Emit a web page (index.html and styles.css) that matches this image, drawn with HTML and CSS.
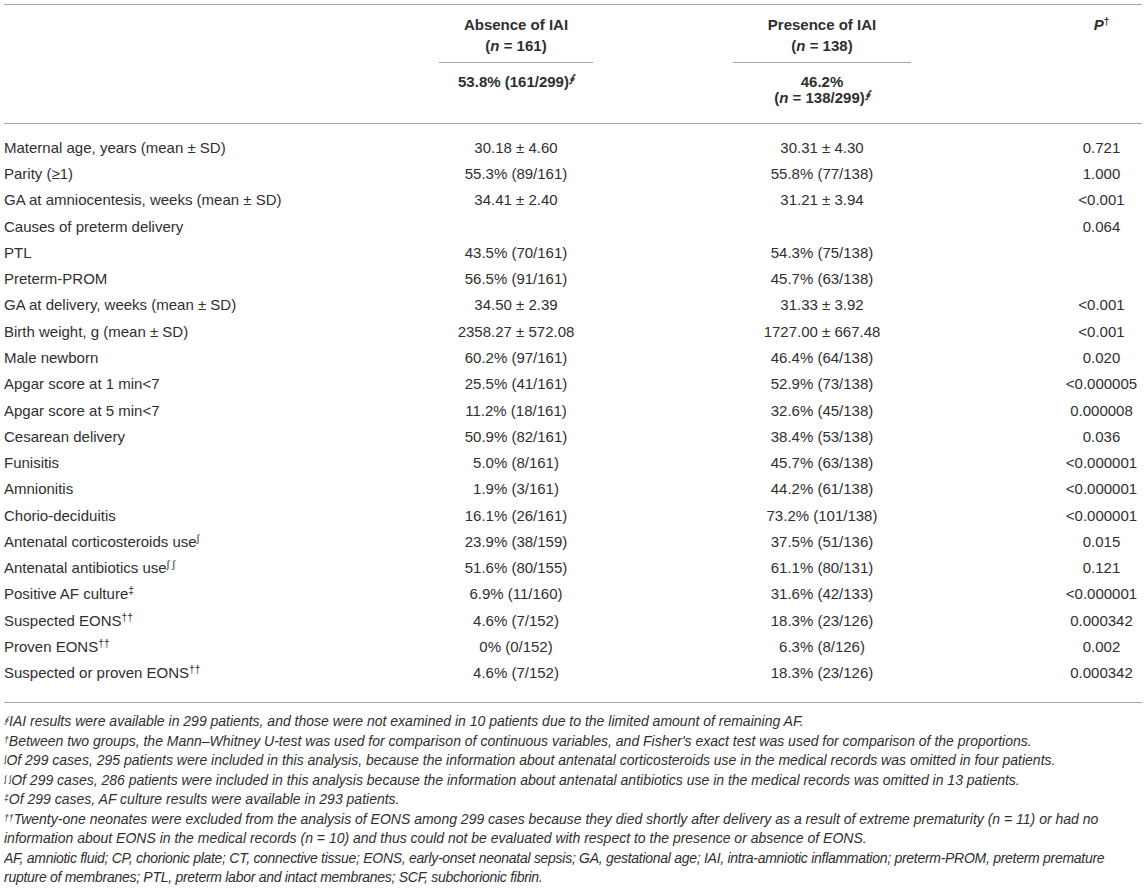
FILE: index.html
```html
<!DOCTYPE html>
<html lang="en">
<head>
<meta charset="utf-8">
<title>Table</title>
<link rel="stylesheet" href="styles.css">
</head>
<body>
<table class="tbl">
  <colgroup>
    <col class="c-lab">
    <col class="c-abs">
    <col class="c-pre">
    <col class="c-p">
  </colgroup>
  <thead>
    <tr>
      <th class="lab"></th>
      <th class="abs">
        <div class="grp-top">Absence of IAI<br>(<i>n</i> = 161)</div>
        <div class="grp-sub">53.8% (161/299)<sup class="sym">∮</sup></div>
      </th>
      <th class="pre">
        <div class="grp-top">Presence of IAI<br>(<i>n</i> = 138)</div>
        <div class="grp-sub">46.2%<br>(<i>n</i> = 138/299)<sup class="sym">∮</sup></div>
      </th>
      <th class="pv"><i>P</i><sup>†</sup></th>
    </tr>
  </thead>
  <tbody>
    <tr class="first"><td class="lab">Maternal age, years (mean ± SD)</td><td class="abs">30.18 ± 4.60</td><td class="pre">30.31 ± 4.30</td><td class="pv">0.721</td></tr>
    <tr><td class="lab">Parity (≥1)</td><td class="abs">55.3% (89/161)</td><td class="pre">55.8% (77/138)</td><td class="pv">1.000</td></tr>
    <tr><td class="lab">GA at amniocentesis, weeks (mean ± SD)</td><td class="abs">34.41 ± 2.40</td><td class="pre">31.21 ± 3.94</td><td class="pv">&lt;0.001</td></tr>
    <tr><td class="lab">Causes of preterm delivery</td><td class="abs"></td><td class="pre"></td><td class="pv">0.064</td></tr>
    <tr><td class="lab">PTL</td><td class="abs">43.5% (70/161)</td><td class="pre">54.3% (75/138)</td><td class="pv"></td></tr>
    <tr><td class="lab">Preterm-PROM</td><td class="abs">56.5% (91/161)</td><td class="pre">45.7% (63/138)</td><td class="pv"></td></tr>
    <tr><td class="lab">GA at delivery, weeks (mean ± SD)</td><td class="abs">34.50 ± 2.39</td><td class="pre">31.33 ± 3.92</td><td class="pv">&lt;0.001</td></tr>
    <tr><td class="lab">Birth weight, g (mean ± SD)</td><td class="abs">2358.27 ± 572.08</td><td class="pre">1727.00 ± 667.48</td><td class="pv">&lt;0.001</td></tr>
    <tr><td class="lab">Male newborn</td><td class="abs">60.2% (97/161)</td><td class="pre">46.4% (64/138)</td><td class="pv">0.020</td></tr>
    <tr><td class="lab">Apgar score at 1 min&lt;7</td><td class="abs">25.5% (41/161)</td><td class="pre">52.9% (73/138)</td><td class="pv">&lt;0.000005</td></tr>
    <tr><td class="lab">Apgar score at 5 min&lt;7</td><td class="abs">11.2% (18/161)</td><td class="pre">32.6% (45/138)</td><td class="pv">0.000008</td></tr>
    <tr><td class="lab">Cesarean delivery</td><td class="abs">50.9% (82/161)</td><td class="pre">38.4% (53/138)</td><td class="pv">0.036</td></tr>
    <tr><td class="lab">Funisitis</td><td class="abs">5.0% (8/161)</td><td class="pre">45.7% (63/138)</td><td class="pv">&lt;0.000001</td></tr>
    <tr><td class="lab">Amnionitis</td><td class="abs">1.9% (3/161)</td><td class="pre">44.2% (61/138)</td><td class="pv">&lt;0.000001</td></tr>
    <tr><td class="lab">Chorio-deciduitis</td><td class="abs">16.1% (26/161)</td><td class="pre">73.2% (101/138)</td><td class="pv">&lt;0.000001</td></tr>
    <tr><td class="lab">Antenatal corticosteroids use<sup class="sym">∫</sup></td><td class="abs">23.9% (38/159)</td><td class="pre">37.5% (51/136)</td><td class="pv">0.015</td></tr>
    <tr><td class="lab">Antenatal antibiotics use<sup class="sym">∫ ∫</sup></td><td class="abs">51.6% (80/155)</td><td class="pre">61.1% (80/131)</td><td class="pv">0.121</td></tr>
    <tr><td class="lab">Positive AF culture<sup>‡</sup></td><td class="abs">6.9% (11/160)</td><td class="pre">31.6% (42/133)</td><td class="pv">&lt;0.000001</td></tr>
    <tr><td class="lab">Suspected EONS<sup>††</sup></td><td class="abs">4.6% (7/152)</td><td class="pre">18.3% (23/126)</td><td class="pv">0.000342</td></tr>
    <tr><td class="lab">Proven EONS<sup>††</sup></td><td class="abs">0% (0/152)</td><td class="pre">6.3% (8/126)</td><td class="pv">0.002</td></tr>
    <tr class="last"><td class="lab">Suspected or proven EONS<sup>††</sup></td><td class="abs">4.6% (7/152)</td><td class="pre">18.3% (23/126)</td><td class="pv">0.000342</td></tr>
  </tbody>
</table>
<div class="notes">
  <p class="note"><sup class="sym">∮</sup>IAI results were available in 299 patients, and those were not examined in 10 patients due to the limited amount of remaining AF.</p>
  <p class="note"><sup>†</sup>Between two groups, the Mann–Whitney U-test was used for comparison of continuous variables, and Fisher's exact test was used for comparison of the proportions.</p>
  <p class="note"><sup class="sym">∫</sup>Of 299 cases, 295 patients were included in this analysis, because the information about antenatal corticosteroids use in the medical records was omitted in four patients.</p>
  <p class="note"><sup class="sym">∫ ∫</sup>Of 299 cases, 286 patients were included in this analysis because the information about antenatal antibiotics use in the medical records was omitted in 13 patients.</p>
  <p class="note"><sup>‡</sup>Of 299 cases, AF culture results were available in 293 patients.</p>
  <p class="note"><sup>††</sup>Twenty-one neonates were excluded from the analysis of EONS among 299 cases because they died shortly after delivery as a result of extreme prematurity (n = 11) or had no information about EONS in the medical records (n = 10) and thus could not be evaluated with respect to the presence or absence of EONS.</p>
  <p class="note abbr">AF, amniotic fluid; CP, chorionic plate; CT, connective tissue; EONS, early-onset neonatal sepsis; GA, gestational age; IAI, intra-amniotic inflammation; preterm-PROM, preterm premature rupture of membranes; PTL, preterm labor and intact membranes; SCF, subchorionic fibrin.</p>
</div>
</body>
</html>
```

FILE: styles.css
```css
html, body {
  background: #ffffff;
}

body {
  margin: 4px 4px 0;
  font-family: "Liberation Sans", Arial, Helvetica, sans-serif;
  color: #2f2f2f;
}

.tbl {
  width: 1138px;
  border-collapse: collapse;
  table-layout: fixed;
  font-size: 15px;
  border-top: 1px solid #a8a8a8;
}

.c-lab { width: 435px; }
.c-abs { width: 224px; }
.c-pre { width: 318px; }
.c-p { width: 161px; }

th, td {
  padding: 0;
  text-align: center;
  vertical-align: top;
}

th {
  font-weight: bold;
  line-height: 21px;
  padding-top: 9px;
}

thead tr {
  border-bottom: 1px solid #a8a8a8;
}

td.lab, th.lab {
  text-align: left;
}

.abs { padding-right: 70px; }
.pre { padding-left: 70px; padding-right: 70px; }
.pv { padding-left: 80px; }

.grp-top {
  padding-bottom: 6px;
  border-bottom: 1px solid #a8a8a8;
}

.grp-sub {
  line-height: 16px;
  padding-top: 11px;
  padding-bottom: 17px;
}

td {
  line-height: 18px;
  padding-top: 4.15px;
  padding-bottom: 4.15px;
}

tr.first td {
  padding-top: 14.7px;
}

tr.last td {
  padding-bottom: 20px;
}

sup {
  font-size: 0.68em;
  line-height: 0;
  vertical-align: 0.5em;
}

.sym {
  font-style: italic;
}

.notes {
  border-top: 1px solid #a8a8a8;
  padding-top: 9px;
}

.note {
  margin: 0;
  font-size: 14px;
  font-style: italic;
  line-height: 19.5px;
}

.note sup {
  font-size: 0.62em;
  vertical-align: 0.3em;
}

.abbr {
  letter-spacing: -0.28px;
}
```
